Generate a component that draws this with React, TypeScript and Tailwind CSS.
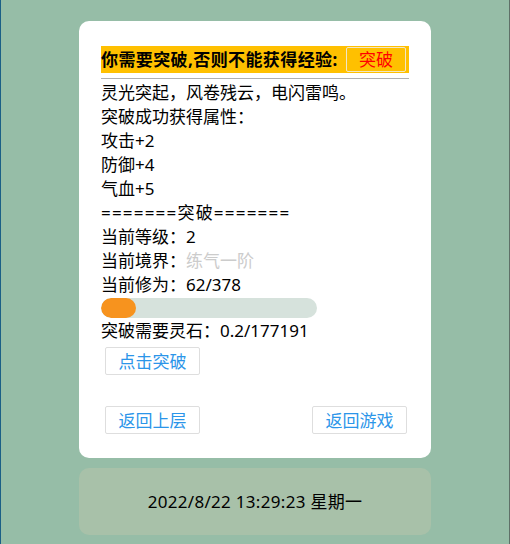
import React from 'react';

const font = { fontFamily: '"Noto Sans", "Noto Sans CJK SC", sans-serif' };

const lines = ['灵光突起，风卷残云，电闪雷鸣。', '突破成功获得属性：', '攻击+2', '防御+4', '气血+5'];

const LinkButton: React.FC<{ label: string }> = ({ label }) => (
    <button className="h-[28px] w-[95px] border border-[#dedede] rounded-[2px] bg-white text-[17px] leading-none text-[#2b95e9]">
        {label}
    </button>
);

export default function App() {
    const exp = 62;
    const max = 378;
    return (
        <div className="w-[510px] h-[544px] bg-[#96bda7] border-l border-l-[#1b5f86] border-r border-r-[#5f7068] overflow-hidden text-black" style={font}>
            <div className="w-[352px] ml-[78px] mt-[21px] bg-white rounded-[10px] px-[22px] pt-[25px] pb-[24px]">
                <div className="flex items-center justify-between h-[27px] bg-[#ffc000] pr-[3px]">
                    <span className="font-bold text-[17px] leading-none tracking-[0.4px]">你需要突破,否则不能获得经验:</span>
                    <button className="h-[25px] w-[60px] border border-[#f0e6c8] rounded-[2px] text-[17px] leading-none text-[#ff0000]">
                        突破
                    </button>
                </div>
                <div className="mt-[5px] h-px bg-[#b0b0b0]"></div>
                <div className="text-[17px] leading-[24px] mt-[2px]">
                    {lines.map((t, i) => (
                        <div key={i}>{t}</div>
                    ))}
                    <div className="tracking-[1.2px]">=======突破=======</div>
                    <div>当前等级：2</div>
                    <div>
                        当前境界：<span className="text-[#cccccc]">练气一阶</span>
                    </div>
                    <div>当前修为：{exp}/{max}</div>
                </div>
                <div className="mt-[1px] w-[216px] h-[20px] rounded-full bg-[#d6e2dc] overflow-hidden">
                    <div className="h-full rounded-full bg-[#f7931e]" style={{ width: `${Math.max((exp / max) * 216, 33)}px` }}></div>
                </div>
                <div className="text-[17px] leading-[24px] mt-[1px]">突破需要灵石：0.2/177191</div>
                <div className="mt-[4px] pl-[4px]">
                    <LinkButton label="点击突破" />
                </div>
                <div className="flex justify-between mt-[31px] px-[4px] pr-[2px]">
                    <LinkButton label="返回上层" />
                    <LinkButton label="返回游戏" />
                </div>
            </div>
            <div className="w-[352px] ml-[78px] mt-[10px] h-[67px] rounded-[10px] bg-[#a8c1a9] flex items-center justify-center text-[17px] tracking-[0.3px]">
                2022/8/22 13:29:23 星期一
            </div>
        </div>
    );
}
